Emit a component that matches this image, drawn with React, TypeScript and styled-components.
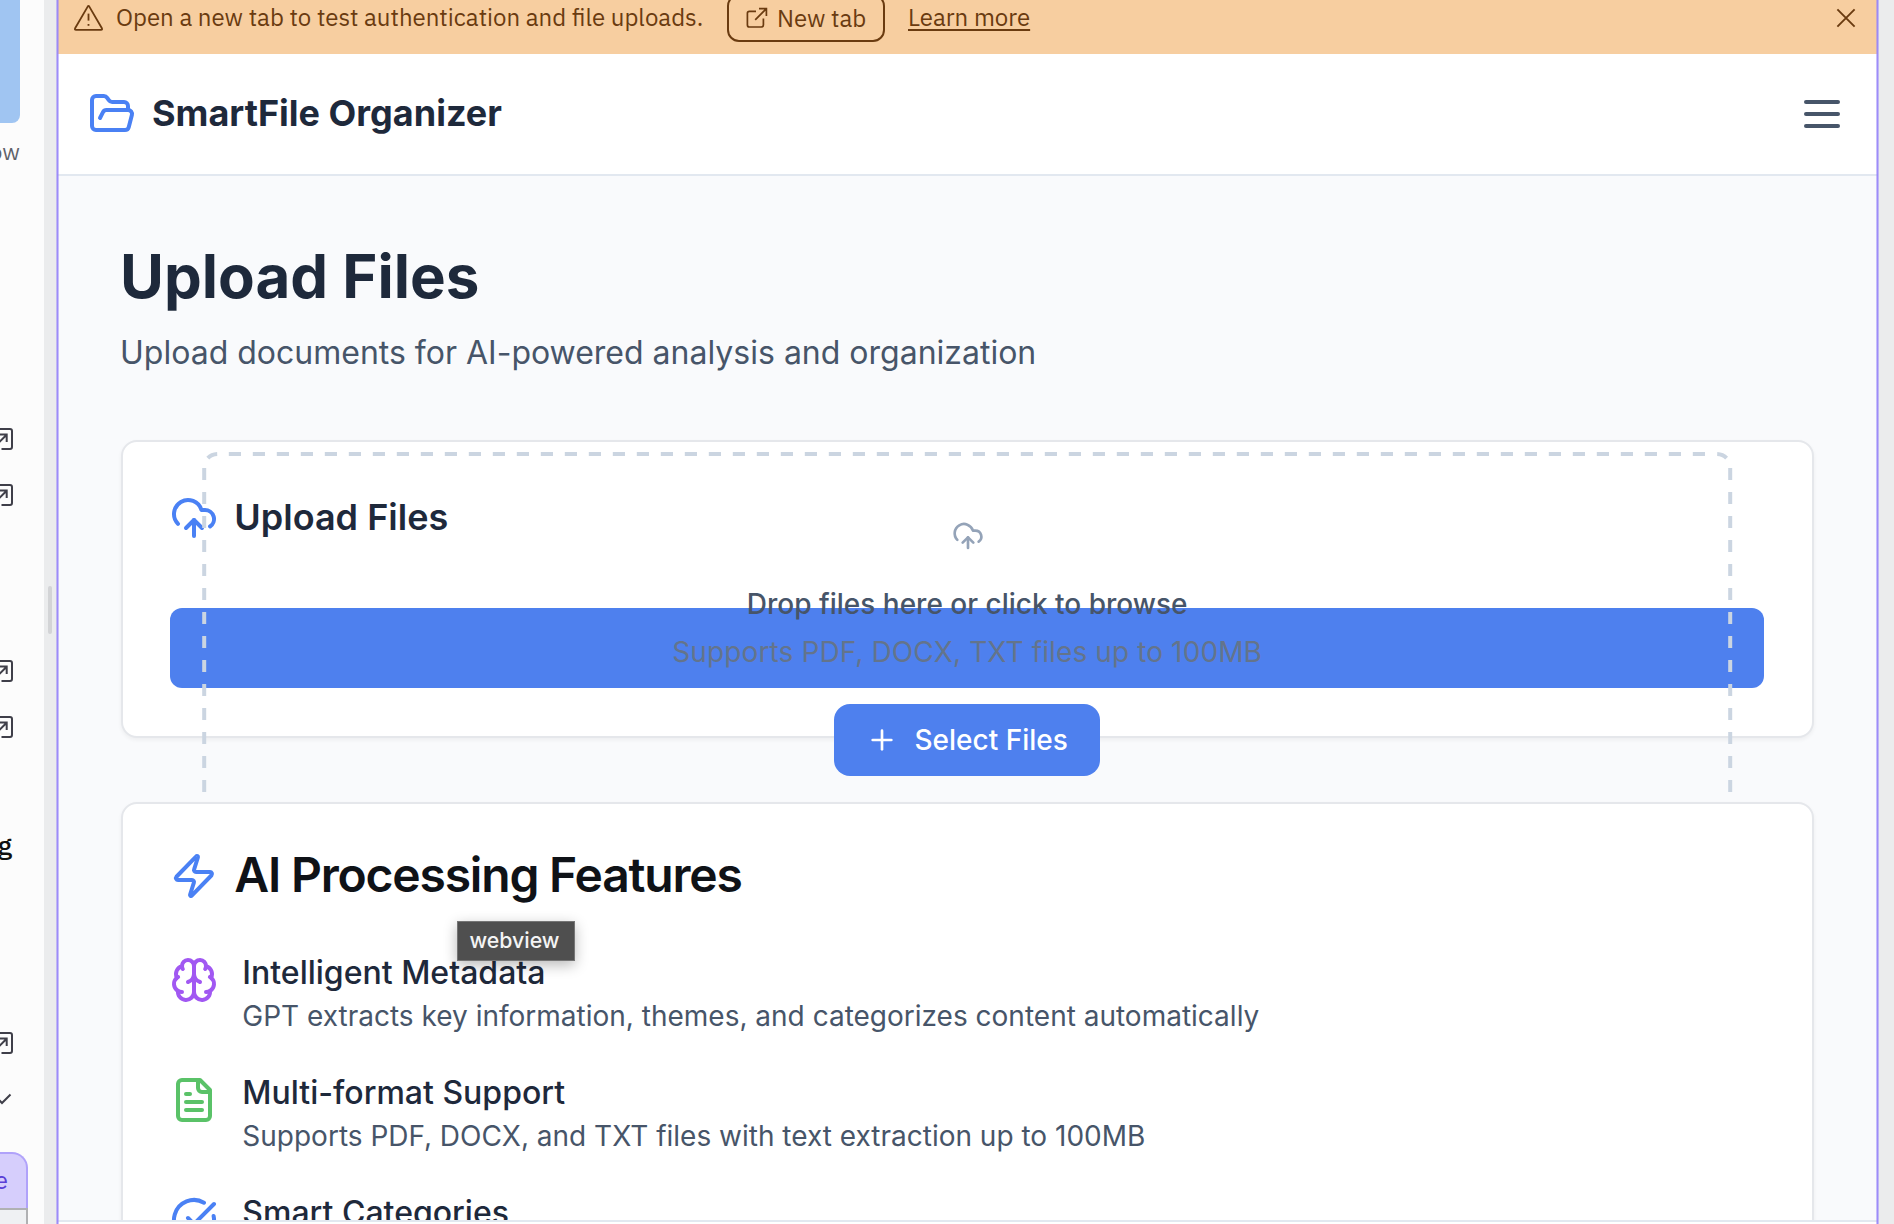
import React from 'react';
import styled, { createGlobalStyle } from 'styled-components';

const GlobalStyle = createGlobalStyle`
  *, *::before, *::after { box-sizing: border-box; }
  html, body { margin: 0; padding: 0; overflow: hidden; }
  body { background: #ebeced; font-family: Inter, "Liberation Sans", sans-serif; }
  h1, h2, h3, p { margin: 0; }
  button { font: inherit; color: inherit; border: 0; background: none; padding: 0; }
`;

const PLEX = '"IBM Plex Sans", "Noto Sans", sans-serif';

const Window = styled.div`
  display: flex;
  width: 1894px;
  height: 1224px;
  overflow: hidden;
`;

/* ---------- sidebar ---------- */

const Sidebar = styled.aside`
  width: 44px;
  flex: none;
  display: flex;
  flex-direction: column;
  align-items: flex-start;
  overflow: hidden;
  background: #fcfcfc;
  font-family: ${PLEX};
`;

const Thumbnail = styled.div`
  width: 20px;
  height: 123px;
  flex: none;
  background: #a0c5f2;
  border-bottom-right-radius: 8px;
`;

const SideItem = styled.div<{ $w: number; $h: number; $gap: number }>`
  display: flex;
  flex: none;
  justify-content: flex-end;
  align-items: center;
  width: ${(p) => p.$w}px;
  height: ${(p) => p.$h}px;
  margin-top: ${(p) => p.$gap}px;
  white-space: nowrap;
  svg { flex: none; }
`;

const SideLabel = styled.span<{ $size: number; $weight: number; $color: string }>`
  font-size: ${(p) => p.$size}px;
  font-weight: ${(p) => p.$weight};
  color: ${(p) => p.$color};
`;

const ModeTab = styled.div`
  display: flex;
  flex: none;
  justify-content: flex-end;
  align-items: center;
  width: 28px;
  height: 56px;
  margin-top: 47px;
  padding: 0 18px 2px 0;
  border: 2px solid #b0a2fa;
  border-width: 2px 2px 0 0;
  border-top-right-radius: 16px;
  background: #d6cefc;
  color: #5b3fd6;
  font-size: 24px;
  line-height: 1;
`;

const PromptBox = styled.div`
  flex: none;
  width: 28px;
  height: 16px;
  border: 2px solid #b0b1b3;
  border-width: 2px 2px 0 0;
  background: #eff1f3;
`;

const Gutter = styled.div`
  width: 13px;
  flex: none;
  display: flex;
  align-items: center;
  padding: 0 0 4px 4px;
  background: #ebeced;
`;

const Grip = styled.div`
  width: 4px;
  height: 48px;
  border-radius: 2px;
  background: #d3d4d6;
`;

/* ---------- preview frame ---------- */

const Preview = styled.div`
  position: relative;
  width: 1821px;
  flex: none;
  display: flex;
  flex-direction: column;
  background: #f9fafc;

  &::before, &::after {
    content: '';
    position: absolute;
    z-index: 5;
    top: 0;
    bottom: 0;
    width: 3px;
    background: linear-gradient(90deg,
      rgba(150, 132, 250, 0.5) 0 1px,
      rgba(152, 134, 248, 0.95) 1px 2px,
      rgba(150, 132, 250, 0.5) 2px 3px);
  }
  &::before { left: -1px; }
  &::after { right: -1px; }
`;

const Banner = styled.div`
  display: flex;
  flex: none;
  align-items: center;
  height: 72px;
  margin-top: -18px;
  padding: 0 22px 0 14px;
  background: #f7cea0;
  color: #6a3b10;
  font-family: ${PLEX};
  font-size: 24px;
  white-space: nowrap;
  > svg { flex: none; }
`;

const BannerText = styled.span`
  width: 588px;
  margin: -2px 0 0 11px;
`;

const NewTabButton = styled.button`
  display: flex;
  align-items: center;
  gap: 9px;
  width: 158px;
  height: 48px;
  margin-left: 23px;
  padding: 0 0 1px 17px;
  border: 2px solid #6a3b10;
  border-radius: 12px;
`;

const LearnMore = styled.a`
  margin: -2px auto 0 23px;
  text-decoration: underline;
  text-decoration-thickness: 2px;
  text-underline-offset: 3px;
`;

const AppHeader = styled.header`
  display: flex;
  flex: none;
  align-items: center;
  justify-content: space-between;
  height: 122px;
  padding: 0 32px 0 31px;
  background: #fff;
  border-bottom: 2px solid #e2e8f0;
`;

const Brand = styled.div`
  display: flex;
  align-items: center;
  gap: 16px;
  color: #1e293b;
  font-size: 36px;
  font-weight: 700;
  line-height: 54px;
  span { margin-top: -2px; }
`;

const Main = styled.main`
  display: flex;
  flex: none;
  flex-direction: column;
  height: 1044px;
  padding: 64px 64px 0 63.5px;
  overflow: hidden;
`;

const PageTitle = styled.h1`
  margin-left: -0.5px;
  color: #1e293b;
  font-size: 60px;
  font-weight: 700;
  line-height: 72px;
`;

const PageLead = styled.p`
  margin: 17px 0 0 -0.5px;
  color: #475569;
  font-size: 32px;
  line-height: 48px;
`;

const Card = styled.section`
  position: relative;
  z-index: 0;
  flex: none;
  background: #fff;
  border: 2px solid #e5e7eb;
  border-radius: 16px;
  box-shadow: 0 2px 4px rgba(0, 0, 0, 0.05);
  padding: 48px 48px 48px 47.8px;
`;

const UploadCard = styled(Card)`
  height: 298px;
  margin-top: 63px;
`;

const FeatureCard = styled(Card)`
  height: 520px;
  margin-top: 64px;
`;

const UploadTitle = styled.h3`
  display: flex;
  align-items: center;
  gap: 16px;
  height: 56px;
  color: #1e293b;
  font-size: 36px;
  font-weight: 600;
  line-height: 54px;
  span { margin-top: -2px; }
`;

const UploadBar = styled.div`
  display: flex;
  align-items: center;
  height: 80px;
  margin-top: 62px;
  padding: 0 32px;
  border-radius: 12px;
  background: #4e80ee;
`;

/* The zone is taller than the bar that holds it and overflows on both sides. */
const DropZone = styled.div`
  position: relative;
  display: flex;
  flex: 1;
  flex-direction: column;
  align-items: center;
  height: 392px;
  padding: 68px 0 0;
  font-size: 28px;
  line-height: 40px;
`;

const DropIcon = styled.div`
  height: 32px;
  padding-left: 1px;
  svg { display: block; }
`;

const DashedOutline = styled.svg`
  position: absolute;
  left: 0;
  top: 0;
`;

const DropTitle = styled.p`
  margin-top: 32px;
  color: #475569;
  font-weight: 500;
`;

const DropHint = styled.p`
  margin-top: 8px;
  color: #64748b;
  letter-spacing: 0.12px;
`;

const SelectButton = styled.button`
  position: relative;
  display: flex;
  align-items: center;
  gap: 16px;
  height: 72px;
  margin-top: 32px;
  padding: 0 32px;
  border-radius: 16px;
  background: #4e80ee;
  color: #fff;
  font-weight: 500;
`;

const FeatureTitle = styled.h2`
  display: flex;
  align-items: center;
  gap: 16px;
  height: 48px;
  color: #0f1217;
  font-size: 48px;
  font-weight: 600;
  line-height: 46px;
  letter-spacing: -1.2px;
  span { margin-top: -2px; }
`;

const FeatureList = styled.div`
  display: flex;
  flex-direction: column;
  gap: 32px;
  margin-top: 48px;
`;

const FeatureRow = styled.div`
  display: flex;
  align-items: flex-start;
  gap: 24px;
  > svg { margin-top: 8px; flex: none; }
`;

const FeatureName = styled.p`
  height: 48px;
  padding-top: 1px;
  color: #1e293b;
  font-size: 32px;
  font-weight: 500;
  line-height: 48px;
`;

const FeatureText = styled.p`
  color: #475569;
  font-size: 28px;
  line-height: 40px;
`;

const BottomBar = styled.div`
  flex: none;
  height: 4px;
  border-top: 2px solid #e2e8f0;
  background: #fff;
`;

const Tooltip = styled.div`
  position: absolute;
  z-index: 6;
  left: 400px;
  top: 921px;
  display: flex;
  align-items: center;
  justify-content: center;
  width: 118px;
  height: 40px;
  padding: 0 3px 2px 0;
  background: #4f4f4f;
  border: 1px solid #757575;
  box-shadow: 0 4px 14px rgba(0, 0, 0, 0.28);
  color: #f4f4f4;
  font-size: 21.3px;
  font-weight: 500;
`;

/* ---------- icons ---------- */

const ICONS = {
  folder: ['m6 14 1.5-2.9A2 2 0 0 1 9.24 10H20a2 2 0 0 1 1.94 2.5l-1.54 6a2 2 0 0 1-1.95 1.5H4a2 2 0 0 1-2-2V5a2 2 0 0 1 2-2h3.9a2 2 0 0 1 1.69.9l.81 1.2a2 2 0 0 0 1.67.9H18a2 2 0 0 1 2 2v2'],
  menu: ['M4 6h16', 'M4 12h16', 'M4 18h16'],
  cloud: ['M12 13v8', 'M4 14.899A7 7 0 1 1 15.71 8h1.79a4.5 4.5 0 0 1 2.5 8.242', 'm8 17 4-4 4 4'],
  plus: ['M5 12h14', 'M12 5v14'],
  zap: ['M4 14a1 1 0 0 1-.78-1.63l9.9-10.2a.5.5 0 0 1 .86.46l-1.92 6.02A1 1 0 0 0 13 10h7a1 1 0 0 1 .78 1.63l-9.9 10.2a.5.5 0 0 1-.86-.46l1.92-6.02A1 1 0 0 0 11 14z'],
  brain: [
    'M12 5a3 3 0 1 0-5.997.125 4 4 0 0 0-2.526 5.77 4 4 0 0 0 .556 6.588A4 4 0 1 0 12 18Z',
    'M12 5a3 3 0 1 1 5.997.125 4 4 0 0 1 2.526 5.77 4 4 0 0 1-.556 6.588A4 4 0 1 1 12 18Z',
    'M15 13a4.5 4.5 0 0 1-3-4 4.5 4.5 0 0 1-3 4',
    'M17.599 6.5a3 3 0 0 0 .399-1.375',
    'M6.003 5.125A3 3 0 0 0 6.401 6.5',
    'M3.477 10.896a4 4 0 0 1 .585-.396',
    'M19.938 10.5a4 4 0 0 1 .585.396',
    'M6 18a4 4 0 0 1-1.967-.516',
    'M19.967 17.484A4 4 0 0 1 18 18',
  ],
  file: ['M15 2H6a2 2 0 0 0-2 2v16a2 2 0 0 0 2 2h12a2 2 0 0 0 2-2V7Z', 'M14 2v4a2 2 0 0 0 2 2h4', 'M10 9H8', 'M16 13H8', 'M16 17H8'],
  check: ['M21.801 10A10 10 0 1 1 17 3.335', 'm9 11 3 3L22 4'],
};

type IconName = keyof typeof ICONS;

function Icon({ name, size = 48, color = '#4a81f4' }: { name: IconName; size?: number; color?: string }) {
  return (
    <svg width={size} height={size} viewBox="0 0 24 24" fill="none" stroke={color} strokeWidth={2} strokeLinecap="round" strokeLinejoin="round">
      {ICONS[name].map((d) => <path key={d} d={d} />)}
    </svg>
  );
}

const WarningIcon = () => (
  <svg width="34" height="36" viewBox="0 0 34 36" fill="none" stroke="#6a3b10" strokeWidth="1.8" strokeLinejoin="round">
    <path d="M16.7 6.6 4.1 28.3Q3.4 29.8 5 29.8H30Q31.6 29.8 30.9 28.3L18.3 6.6Q17.5 5.4 16.7 6.6Z" />
    <path d="M17.5 13.6V20.6" />
    <path d="M17.5 24V25.8" />
  </svg>
);

const NewTabIcon = () => (
  <svg width="22" height="22" viewBox="0 0 22 22" fill="none" stroke="#6a3b10" strokeWidth="1.7">
    <path d="M10 4.3H3.4Q1.4 4.3 1.4 6.3V18Q1.4 20 3.4 20H15.4Q17.4 20 17.4 18V11.6" />
    <path d="M13 1.6H20.4V9M20.2 1.8 9.2 12.8" />
  </svg>
);

const CloseIcon = () => (
  <svg width="20" height="20" viewBox="0 0 20 20" fill="none" stroke="#6a3b10" strokeWidth="1.9">
    <path d="M1.4 1.4 18.6 18.6M18.6 1.4 1.4 18.6" />
  </svg>
);

const OpenBoxIcon = () => (
  <svg width="24" height="24" viewBox="0 0 24 24" fill="none" stroke="#3f3f49" strokeWidth="2">
    <path d="M2 13V4Q2 2 4 2H20Q22 2 22 4V20Q22 22 20 22H11.5" />
    <path d="M9.6 7.6H16.7V15M16.4 8 5 19.4" />
  </svg>
);

const ChevronIcon = () => (
  <svg width="20" height="12" viewBox="0 0 20 12" fill="none" stroke="#3f3f49" strokeWidth="2">
    <path d="M1.5 1.5 10 10 18.5 1.5" />
  </svg>
);

/* Evenly spaced 12px dashes with short arcs at the upper corners. */
const ZoneOutline = () => (
  <DashedOutline width="1531" height="392" viewBox="0 0 1531 392" fill="none" stroke="#cbd5e1" strokeWidth="4">
    <path d="M26.8 2H1504" strokeDasharray="12.2 11.8" />
    <path d="M2.2 16V390" strokeDasharray="12 12" />
    <path d="M1528.2 16V390" strokeDasharray="12 12" />
    <path d="M5.8 6.2Q9.5 2.2 15.2 2" />
    <path d="M1524.6 6.2Q1520.9 2.2 1515.2 2" />
  </DashedOutline>
);

const FEATURES: { icon: IconName; color: string; name: string; text: string }[] = [
  { icon: 'brain', color: '#a158f2', name: 'Intelligent Metadata', text: 'GPT extracts key information, themes, and categorizes content automatically' },
  { icon: 'file', color: '#5ac268', name: 'Multi-format Support', text: 'Supports PDF, DOCX, and TXT files with text extraction up to 100MB' },
  { icon: 'check', color: '#4a81f4', name: 'Smart Categories', text: '' },
];

export default function App() {
  return (
    <>
      <GlobalStyle />
      <Window>
        <Sidebar>
          <Thumbnail />
          <SideItem $w={20} $h={36} $gap={10}><SideLabel $size={23} $weight={400} $color="#5f626a">ow</SideLabel></SideItem>
          <SideItem $w={14} $h={24} $gap={258}><OpenBoxIcon /></SideItem>
          <SideItem $w={14} $h={24} $gap={32}><OpenBoxIcon /></SideItem>
          <SideItem $w={14} $h={24} $gap={152}><OpenBoxIcon /></SideItem>
          <SideItem $w={14} $h={24} $gap={32}><OpenBoxIcon /></SideItem>
          <SideItem $w={12} $h={36} $gap={87}><SideLabel $size={27} $weight={500} $color="#111">g</SideLabel></SideItem>
          <SideItem $w={14} $h={24} $gap={169}><OpenBoxIcon /></SideItem>
          <SideItem $w={12} $h={12} $gap={38}><ChevronIcon /></SideItem>
          <ModeTab>e</ModeTab>
          <PromptBox />
        </Sidebar>
        <Gutter><Grip /></Gutter>
        <Preview>
          <Banner>
            <WarningIcon />
            <BannerText>Open a new tab to test authentication and file uploads.</BannerText>
            <NewTabButton><NewTabIcon />New tab</NewTabButton>
            <LearnMore>Learn more</LearnMore>
            <CloseIcon />
          </Banner>
          <AppHeader>
            <Brand><Icon name="folder" /><span>SmartFile Organizer</span></Brand>
            <Icon name="menu" color="#475569" />
          </AppHeader>
          <Main>
            <PageTitle>Upload Files</PageTitle>
            <PageLead>Upload documents for AI-powered analysis and organization</PageLead>
            <UploadCard>
              <UploadTitle><Icon name="cloud" /><span>Upload Files</span></UploadTitle>
              <UploadBar>
                <DropZone>
                  <ZoneOutline />
                  <DropIcon><Icon name="cloud" size={32} color="#94a3b8" /></DropIcon>
                  <DropTitle>Drop files here or click to browse</DropTitle>
                  <DropHint>Supports PDF, DOCX, TXT files up to 100MB</DropHint>
                  <SelectButton><Icon name="plus" size={32} color="#fff" />Select Files</SelectButton>
                </DropZone>
              </UploadBar>
            </UploadCard>
            <FeatureCard>
              <FeatureTitle><Icon name="zap" /><span>AI Processing Features</span></FeatureTitle>
              <FeatureList>
                {FEATURES.map((f) => (
                  <FeatureRow key={f.name}>
                    <Icon name={f.icon} color={f.color} />
                    <div>
                      <FeatureName>{f.name}</FeatureName>
                      <FeatureText>{f.text}</FeatureText>
                    </div>
                  </FeatureRow>
                ))}
              </FeatureList>
            </FeatureCard>
          </Main>
          <BottomBar />
          <Tooltip>webview</Tooltip>
        </Preview>
      </Window>
    </>
  );
}
